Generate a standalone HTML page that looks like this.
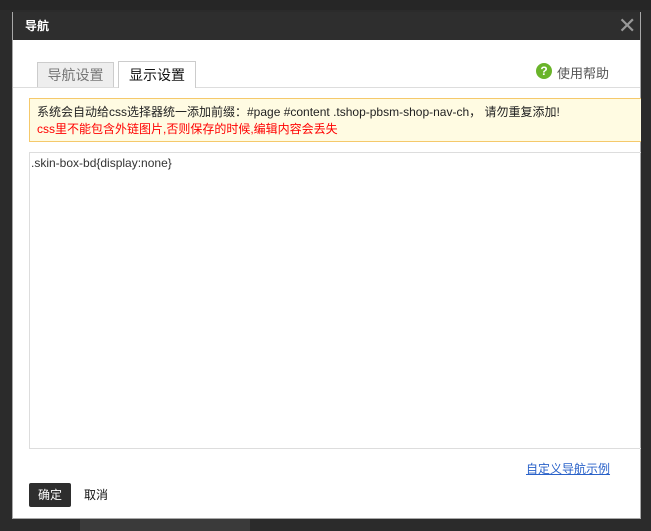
<!DOCTYPE html>
<html><head><meta charset="utf-8"><style>
body{margin:0;width:651px;height:531px;background:#2b2b2b;position:relative;overflow:hidden;font-family:"Liberation Sans","Noto Sans CJK SC",sans-serif;font-size:12px}
.a{position:absolute}
</style></head><body>
<div class="a" style="left:0;top:0;width:651px;height:10px;background:#262626"></div>
<div class="a" style="left:80px;top:518px;width:170px;height:13px;background:#3a3a3a"></div>
<div class="a" style="left:12px;top:12px;width:629px;height:507px;background:#a8a8a8"></div>
<div class="a" style="left:13px;top:12px;width:627px;height:28px;background:#2e2e2e;color:#fff;font-size:12px;line-height:28px"><span style="padding-left:12px;font-weight:bold">导航</span></div>
<div class="a" style="left:618px;top:14px;color:#999;font-size:22px;line-height:24px">✕</div>
<div class="a" style="left:13px;top:40px;width:627px;height:478px;background:#fff"></div>
<div class="a" style="left:13px;top:87px;width:627px;height:1px;background:#ddd"></div>
<div class="a" style="left:37px;top:62px;width:77px;height:25px;background:#eee;border:1px solid #ccc;border-bottom:none;color:#777;font-size:14px;line-height:25px;text-align:center;box-sizing:border-box;white-space:nowrap">导航设置</div>
<div class="a" style="left:118px;top:61px;width:78px;height:27px;background:#fff;border:1px solid #ccc;border-bottom:none;box-sizing:border-box;font-size:14px;line-height:26px;text-align:center;color:#111;white-space:nowrap">显示设置</div>
<div class="a" style="left:536px;top:63px;width:16px;height:16px;border-radius:50%;background:#6ab42a;color:#fff;font-weight:bold;font-size:12px;line-height:16px;text-align:center">?</div>
<div class="a" style="left:557px;top:63px;color:#555;font-size:13px">使用帮助</div>
<div class="a" style="left:29px;top:98px;width:612px;height:44px;background:#fffbe2;border:1px solid #f5c96b;border-right:none;box-sizing:border-box;padding:5px 7px;line-height:17px">
<div style="color:#222">系统会自动给css选择器统一添加前缀：#page #content .tshop-pbsm-shop-nav-ch， 请勿重复添加!</div>
<div style="color:#f00">css里不能包含外链图片,否则保存的时候,编辑内容会丢失</div></div>
<div class="a" style="left:29px;top:152px;width:612px;height:297px;border:1px solid #ddd;border-right:none;box-sizing:border-box;padding:3px 1px;color:#333">.skin-box-bd{display:none}</div>
<div class="a" style="left:526px;top:460px;color:#2a62c9;text-decoration:underline">自定义导航示例</div>
<div class="a" style="left:29px;top:483px;width:42px;height:24px;background:#2e2e2e;border-radius:2px;color:#fff;line-height:24px;text-align:center">确定</div>
<div class="a" style="left:84px;top:483px;line-height:24px;color:#111">取消</div>
</body></html>
